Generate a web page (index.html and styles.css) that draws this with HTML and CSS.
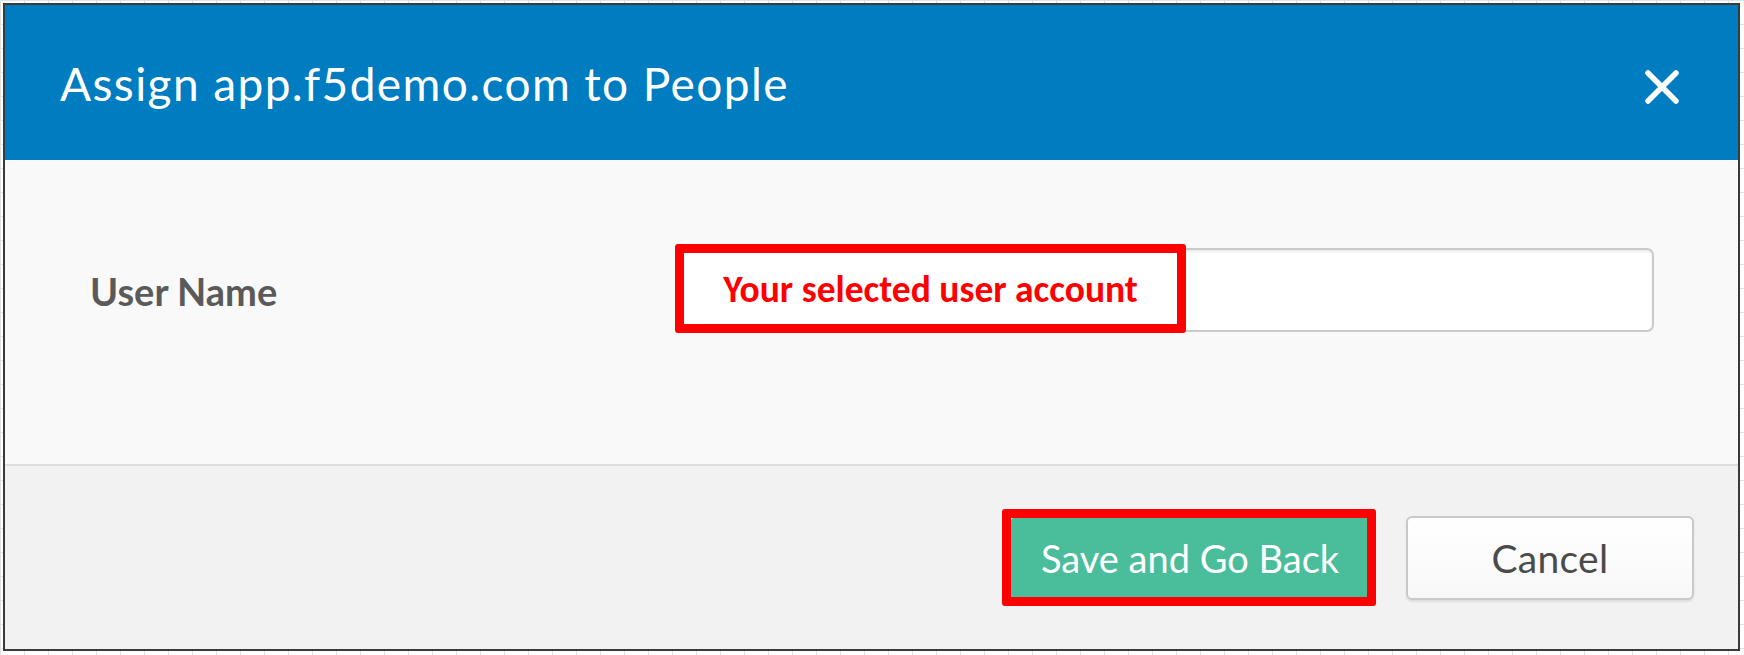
FILE: index.html
```html
<!DOCTYPE html>
<html lang="en">
<head>
<meta charset="utf-8">
<title>Assign app.f5demo.com to People</title>
<link rel="stylesheet" href="styles.css">
</head>
<body>
<div class="dialog">
  <header class="dlg-header">
    <h1 class="dlg-title">Assign app.f5demo.com to People</h1>
    <button class="dlg-close" aria-label="Close">
      <svg width="36" height="36" viewBox="0 0 36 36"><path d="M4 4 L32 32 M32 4 L4 32" stroke="#fff" stroke-width="5.5" stroke-linecap="round" fill="none"/></svg>
    </button>
  </header>
  <section class="dlg-body">
    <div class="field">
      <label class="field-label">User Name</label>
      <div class="field-input">
        <div class="annot annot-input"><span class="annot-text">Your selected user account</span></div>
      </div>
    </div>
  </section>
  <footer class="dlg-footer">
    <div class="btn-wrap">
      <button class="btn btn-primary">Save and Go Back</button>
      <span class="annot annot-btn"></span>
    </div>
    <button class="btn btn-cancel">Cancel</button>
  </footer>
</div>
</body>
</html>
```
FILE: styles.css
```css
html, body {
  margin: 0;
  padding: 0;
}
body {
  width: 1744px;
  height: 655px;
  box-sizing: border-box;
  padding: 3px 0 0 3px;
  background-color: #ffffff;
  background-image:
    linear-gradient(to right, #e2e2e2 1px, transparent 1px),
    linear-gradient(to bottom, #e2e2e2 1px, transparent 1px);
  background-size: 24px 24px;
  font-family: Lato, "Open Sans", sans-serif;
  overflow: hidden;
}
.dialog {
  width: 1737px;
  height: 648px;
  box-sizing: border-box;
  border: 2px solid #3a3a3a;
  display: flex;
  flex-direction: column;
  background: #f9f9f9;
}
.dlg-header {
  height: 155px;
  flex: none;
  background: #007cc0;
  display: flex;
  align-items: center;
  justify-content: space-between;
  padding: 0 58px 0 55px;
  box-sizing: border-box;
}
.dlg-title {
  margin: 0;
  color: #ffffff;
  font-family: Lato, sans-serif;
  font-weight: 400;
  font-size: 46px;
  line-height: 1;
  letter-spacing: 1.4px;
  padding-top: 2px;
}
.dlg-close {
  background: none;
  border: 0;
  padding: 0;
  width: 36px;
  height: 36px;
  display: flex;
  margin-top: 8px;
}
.dlg-body {
  height: 306px;
  flex: none;
  box-sizing: border-box;
  padding: 88px 0 0 85px;
  border-bottom: 2px solid #dedede;
}
.field {
  display: flex;
  align-items: center;
}
.field-label {
  width: 590px;
  flex: none;
  font-family: Lato, sans-serif;
  font-weight: 700;
  font-size: 38px;
  color: #5a5a5a;
  padding-top: 2px;
}
.field-input {
  position: relative;
  width: 974px;
  height: 84px;
  box-sizing: border-box;
  background: #ffffff;
  border: 2px solid #cacaca;
  border-radius: 7px;
  box-shadow: inset 0 2px 3px rgba(0,0,0,0.08);
}
.annot {
  position: absolute;
  box-sizing: border-box;
  border: 9px solid #ff0000;
  border-radius: 3px;
}
.annot-input {
  left: -7px;
  top: -6px;
  width: 511px;
  height: 89px;
  background: #ffffff;
  display: flex;
  align-items: center;
  justify-content: center;
}
.annot-text {
  color: #ff0000;
  font-family: Carlito, "Liberation Sans Narrow", "Open Sans", sans-serif;
  font-weight: 700;
  font-size: 37.5px;
  white-space: nowrap;
}
.dlg-footer {
  flex: 1;
  background: #f2f2f2;
  display: flex;
  justify-content: flex-end;
  align-items: flex-start;
  gap: 37px;
  padding: 52px 44px 0 0;
}
.btn-wrap {
  position: relative;
  display: flex;
}
.btn {
  font-family: Lato, sans-serif;
  font-size: 39px;
  font-weight: 400;
  border-radius: 6px;
  box-sizing: border-box;
  padding: 0;
  cursor: pointer;
}
.btn-primary {
  width: 358px;
  height: 82px;
  background: #4abd9b;
  color: #ffffff;
  border: 0;
  border-bottom: 3px solid #3e9e80;
  border-radius: 3px;
  font-size: 38px;
}
.annot-btn {
  left: -9px;
  top: -9px;
  width: 374px;
  height: 97px;
}
.btn-cancel {
  width: 288px;
  height: 84px;
  margin-top: -2px;
  background: linear-gradient(#ffffff, #f8f8f8);
  color: #4b4b4b;
  border: 2px solid #c9c9c9;
  box-shadow: 0 2px 2px rgba(0,0,0,0.08);
  letter-spacing: 0.3px;
}
```
